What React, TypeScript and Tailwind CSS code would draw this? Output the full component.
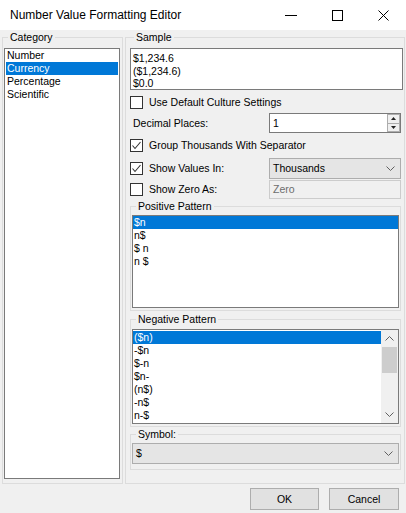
import React from "react";

const Check = ({ checked }: { checked?: boolean }) => (
  <div className="w-[13px] h-[13px] shrink-0 border border-[#333333] bg-white flex items-center justify-center">
    {checked && (
      <svg width="11" height="11" viewBox="0 0 11 11">
        <polyline points="1.5,5.5 4,8.5 9.5,2" fill="none" stroke="#333333" strokeWidth="1.1" />
      </svg>
    )}
  </div>
);

const Chevron = ({ up }: { up?: boolean }) => (
  <svg width="9" height="5" viewBox="0 0 9 5">
    <polyline
      points={up ? "0.5,4.5 4.5,0.5 8.5,4.5" : "0.5,0.5 4.5,4.5 8.5,0.5"}
      fill="none"
      stroke="#606060"
      strokeWidth="1"
    />
  </svg>
);

const Combo = ({ value, className }: { value: string; className?: string }) => (
  <div className={`h-[21px] bg-[#e5e5e5] border border-[#adadad] flex items-center justify-between pl-[3px] pr-[5px] ${className ?? ""}`}>
    <span>{value}</span>
    <Chevron />
  </div>
);

export default function App() {
  const positive = ["$n", "n$", "$ n", "n $"];
  const negative = ["($n)", "-$n", "$-n", "$n-", "(n$)", "-n$", "n-$"];

  return (
    <div className="w-[406px] h-[513px] bg-[#f0f0f0] text-black text-[10.5px] leading-[13px] font-['Liberation_Sans',Arial,sans-serif] overflow-hidden">
      {/* title bar */}
      <div className="h-[30px] bg-white flex items-center">
        <div className="pl-[10px] flex-1 text-[12px]">Number Value Formatting Editor</div>
        <div className="w-[46px] h-[30px] flex items-center justify-center">
          <svg width="12" height="12" viewBox="0 0 12 12">
            <line x1="0" y1="6.5" x2="12" y2="6.5" stroke="#000" strokeWidth="1" />
          </svg>
        </div>
        <div className="w-[46px] h-[30px] flex items-center justify-center">
          <svg width="11" height="11" viewBox="0 0 11 11">
            <rect x="0.5" y="0.5" width="10" height="10" fill="none" stroke="#000" strokeWidth="1" />
          </svg>
        </div>
        <div className="w-[46px] h-[30px] flex items-center justify-center">
          <svg width="11" height="11" viewBox="0 0 11 11">
            <path d="M0.5 0.5 L10.5 10.5 M10.5 0.5 L0.5 10.5" stroke="#000" strokeWidth="1" />
          </svg>
        </div>
      </div>

      <div className="pt-[1px] flex pl-[2px]">
        {/* Category */}
        <fieldset className="w-[121px] h-[453px] border border-[#dcdcdc] pl-[1px] pt-[4px]">
          <legend className="ml-[4px] px-[2px]">Category</legend>
          <div className="w-[116px] h-[431px] bg-white border border-[#7a7a7a] px-[1px]">
            <div className="pl-[1px]">Number</div>
            <div className="pl-[1px] bg-[#0078d7] text-white">Currency</div>
            <div className="pl-[1px]">Percentage</div>
            <div className="pl-[1px]">Scientific</div>
          </div>
        </fieldset>

        {/* Sample + options */}
        <fieldset className="ml-[2px] w-[280px] h-[453px] border border-[#dcdcdc] pl-[4px] pr-[1px] pt-[4px]">
          <legend className="ml-[4px] px-[2px]">Sample</legend>
          <div className="h-[42px] bg-white border border-[#7a7a7a] pl-[2px] pt-[3px] leading-[12.5px]">
            <div>$1,234.6</div>
            <div>($1,234.6)</div>
            <div>$0.0</div>
          </div>

          <div className="mt-[6px] h-[13px] flex items-center gap-[6px]">
            <Check />
            <span>Use Default Culture Settings</span>
          </div>

          <div className="mt-[4px] h-[20px] flex items-center">
            <span className="w-[139px] pl-[3px]">Decimal Places:</span>
            <div className="w-[132px] h-[20px] bg-white border border-[#7a7a7a] flex items-center justify-between pl-[3px]">
              <span>1</span>
              <div className="w-[13px] h-[18px] flex flex-col">
                <div className="flex-1 bg-[#f0f0f0] border border-[#adadad] flex items-center justify-center">
                  <svg width="5" height="3" viewBox="0 0 5 3"><polygon points="0,3 2.5,0 5,3" fill="#222" /></svg>
                </div>
                <div className="flex-1 bg-[#f0f0f0] border border-t-0 border-[#adadad] flex items-center justify-center">
                  <svg width="5" height="3" viewBox="0 0 5 3"><polygon points="0,0 2.5,3 5,0" fill="#222" /></svg>
                </div>
              </div>
            </div>
          </div>

          <div className="mt-[6px] h-[13px] flex items-center gap-[6px]">
            <Check checked />
            <span>Group Thousands With Separator</span>
          </div>

          <div className="mt-[6px] h-[21px] flex items-center">
            <div className="w-[139px] flex items-center gap-[6px]">
              <Check checked />
              <span>Show Values In:</span>
            </div>
            <Combo value="Thousands" className="w-[132px]" />
          </div>

          <div className="mt-[1px] h-[19px] flex items-center">
            <div className="w-[139px] flex items-center gap-[6px]">
              <Check />
              <span>Show Zero As:</span>
            </div>
            <div className="w-[132px] h-[19px] bg-[#f0f0f0] border border-[#cccccc] flex items-center pl-[3px] text-[#6d6d6d]">
              Zero
            </div>
          </div>

          {/* Positive Pattern */}
          <fieldset className="mt-[1px] w-[271px] border border-[#dcdcdc] px-[1px] pt-[2px] pb-[2px]">
            <legend className="ml-[4px] px-[2px]">Positive Pattern</legend>
            <div className="h-[93px] bg-white border border-[#7a7a7a]">
              {positive.map((p, i) => (
                <div key={p} className={`pl-[1px] ${i === 0 ? "bg-[#0078d7] text-white" : ""}`}>
                  {p}
                </div>
              ))}
            </div>
          </fieldset>

          {/* Negative Pattern */}
          <fieldset className="mt-[2px] w-[271px] border border-[#dcdcdc] px-[1px] pt-[3px] pb-[2px]">
            <legend className="ml-[4px] px-[2px]">Negative Pattern</legend>
            <div className="h-[95px] bg-white border border-[#7a7a7a] flex">
              <div className="flex-1 pt-[1px]">
                {negative.map((p, i) => (
                  <div key={p} className={`pl-[1px] ${i === 0 ? "bg-[#0078d7] text-white" : ""}`}>
                    {p}
                  </div>
                ))}
              </div>
              <div className="w-[17px] bg-[#f0f0f0] flex flex-col">
                <div className="h-[17px] flex items-center justify-center">
                  <Chevron up />
                </div>
                <div className="mx-[1px] h-[26px] bg-[#cdcdcd]" />
                <div className="flex-1" />
                <div className="h-[17px] flex items-center justify-center">
                  <Chevron />
                </div>
              </div>
            </div>
          </fieldset>

          {/* Symbol */}
          <fieldset className="mt-[1px] w-[271px] border border-[#dcdcdc] px-[1px] pt-[2px] pb-[5px]">
            <legend className="ml-[4px] px-[2px]">Symbol:</legend>
            <Combo value="$" />
          </fieldset>
        </fieldset>
      </div>

      {/* buttons */}
      <div className="mt-[4px] flex justify-end gap-[10px] pr-[7px]">
        <button className="w-[69px] h-[22px] bg-[#e1e1e1] border border-[#adadad]">OK</button>
        <button className="w-[70px] h-[22px] bg-[#e1e1e1] border border-[#adadad]">Cancel</button>
      </div>
    </div>
  );
}
